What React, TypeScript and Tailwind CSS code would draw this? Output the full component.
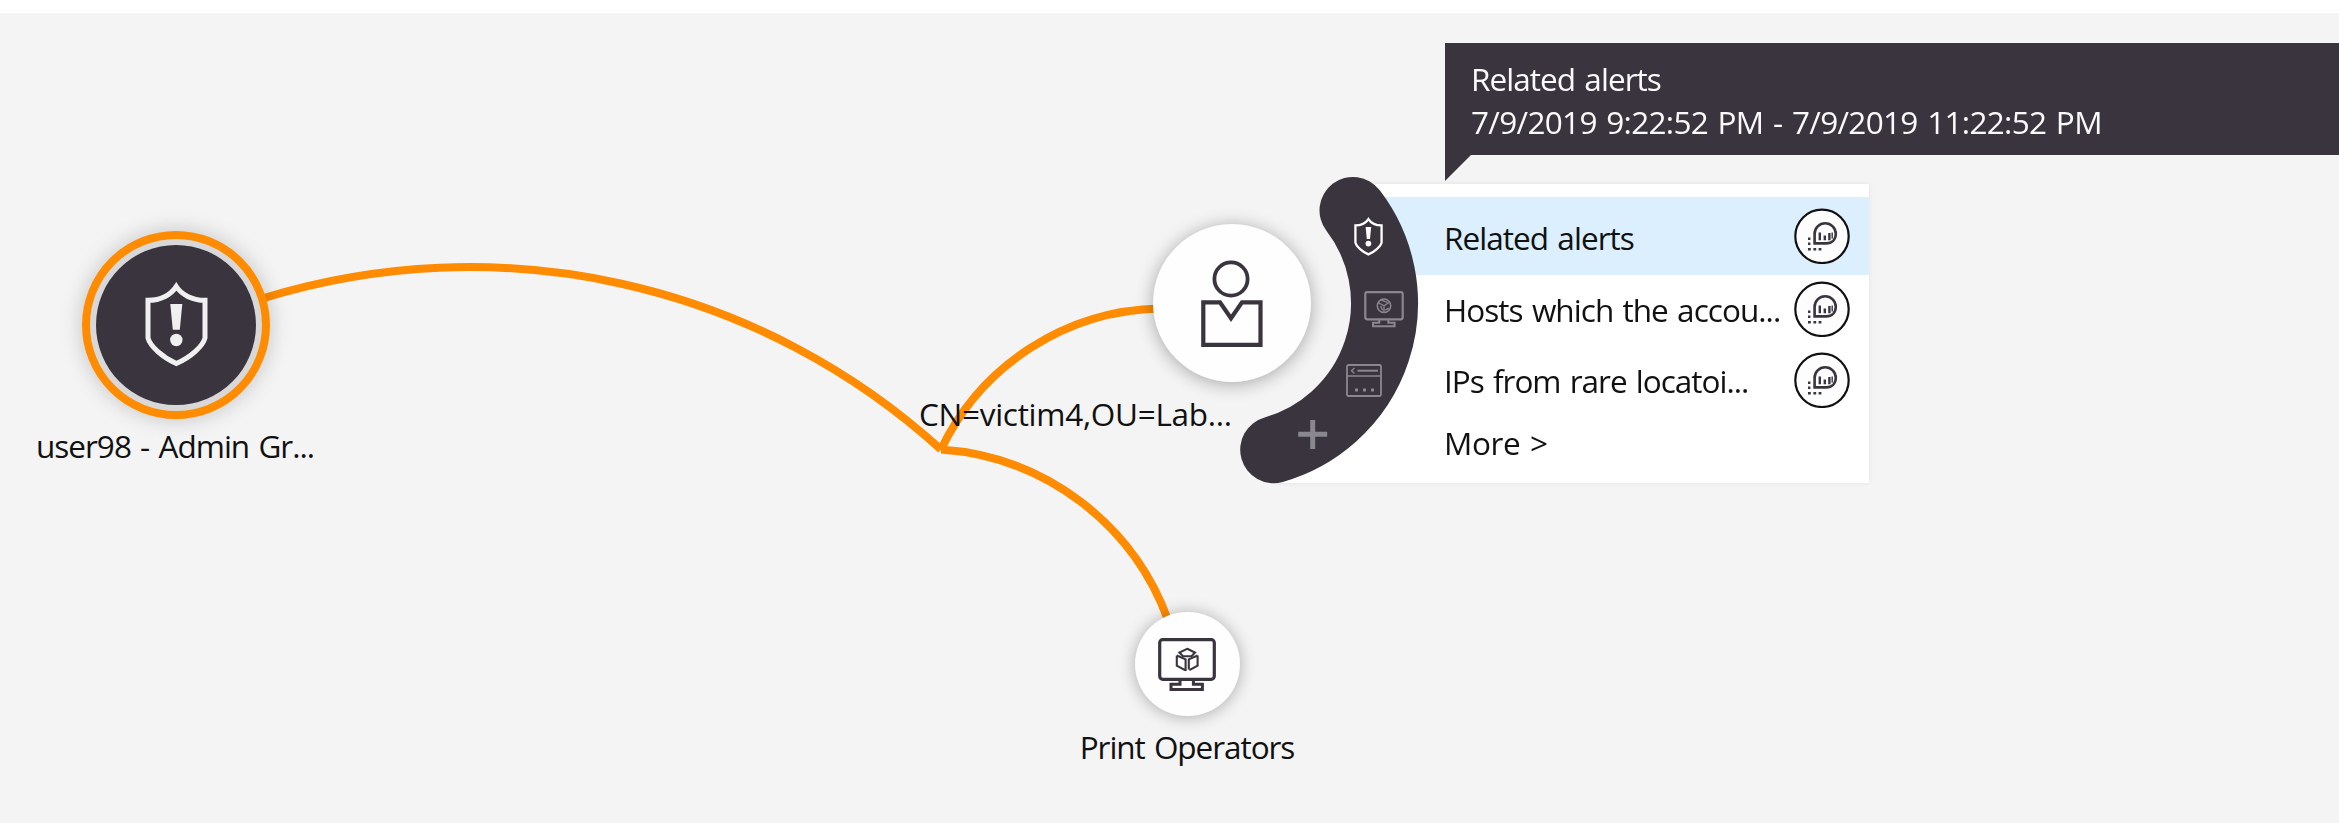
import React from "react";

type IconProps = { className?: string };

function ShieldIcon({ className }: IconProps) {
  return (
    <svg viewBox="0 0 63 85" className={className} fill="none">
      <path
        d="M31.3 4.5C26 12.5 16 18.3 3 18.3V56C5 64 17 75 31.3 81.5C46 75 58 64 60 56V18.3C47 18.3 36.5 12.5 31.3 4.5Z"
        stroke="currentColor"
        strokeWidth="5"
      />
      <path d="M25.3 22H37.3L34.8 47.7H27.8Z" fill="currentColor" />
      <circle cx="31.3" cy="58" r="6.2" fill="currentColor" />
    </svg>
  );
}

function MonitorFrame() {
  return (
    <>
      <rect x="1.7" y="1.7" width="54.6" height="39.6" rx="3" strokeWidth="3.2" />
      <path d="M22 42v4.3h-9v5.2h31.4v-5.2h-9V42" strokeWidth="3" />
    </>
  );
}

function MonitorCubeIcon({ className }: IconProps) {
  return (
    <svg viewBox="0 0 58 54" className={className} fill="none" stroke="currentColor">
      <MonitorFrame />
      <path d="M29.2 10.8L37 14.6L33.5 18.2H25L21.4 14.6Z" strokeWidth="2.1" />
      <path d="M18.8 17.5V27.6L27 32.2M18.8 17.5L27.6 21.4V33" strokeWidth="2.1" />
      <path d="M39.6 17.5V27.6L31.4 32.2M39.6 17.5L30.8 21.4V31.5" strokeWidth="2.1" />
    </svg>
  );
}

function MonitorGlobeIcon({ className }: IconProps) {
  return (
    <svg viewBox="0 0 58 54" className={className} fill="none" stroke="currentColor">
      <MonitorFrame />
      <circle cx="29" cy="21.5" r="9.8" strokeWidth="2.2" />
      <path d="M20.5 17L29 21.5L37.5 16M29 21.5V31M24 13L34 16.5M24 22L27 28M36 25L31 28" strokeWidth="2" />
    </svg>
  );
}

function WindowIcon({ className }: IconProps) {
  return (
    <svg viewBox="0 0 36 33" className={className} fill="none" stroke="currentColor">
      <rect x="1" y="1" width="34" height="31" rx="1.5" strokeWidth="1.8" />
      <path d="M1 12H35" strokeWidth="1.6" />
      <path d="M8.5 4L5.5 6.7L8.5 9.4" strokeWidth="1.4" />
      <path d="M11.5 6.7H32" strokeWidth="2" />
      <path d="M9 26h3M17 26h3M25 26h3" strokeWidth="3" />
    </svg>
  );
}

function PersonIcon({ className }: IconProps) {
  return (
    <svg viewBox="0 0 62 88" className={className} fill="none" stroke="#3a343f">
      <circle cx="30" cy="20" r="16.6" strokeWidth="3.8" />
      <path d="M2.3 43.3H19L30 59.3L41 43.3H59.5V85.8H2.3Z" strokeWidth="4.2" />
    </svg>
  );
}

function InsightBadge() {
  return (
    <svg viewBox="0 0 56 56" className="block h-14 w-14 shrink-0" fill="none">
      <circle cx="28" cy="28.3" r="26.7" fill="#fdfdfd" stroke="#111" strokeWidth="2.2" />
      <g stroke="#3a343f">
        <path d="M20.6 35.4V25.8a10.6 10.6 0 0 1 21.2 0c0 6-4 9.6-9.6 9.6z" strokeWidth="2.6" />
        <path d="M25.8 24.5v7.8M30.8 27.5v4.8M35.4 25v7.3" strokeWidth="2.4" />
        <path d="M38.2 24.5v6" strokeWidth="1.4" />
        <path d="M14 30.7h2.4M14 35.8h2.4M14 41.3h2.8M19.4 41.3h2.8M24.6 41.3h2.8" strokeWidth="2.4" />
      </g>
    </svg>
  );
}

function Edges() {
  return (
    <svg className="absolute inset-0" width="2339" height="823" viewBox="0 0 2339 823" fill="none">
      <g stroke="#ff8c00" strokeWidth="8">
        <path d="M264 298A700 700 0 0 1 941 449.5" />
        <path d="M941 449.5A248 248 0 0 1 1160 308.5" />
        <path d="M941 449.5A260 260 0 0 1 1168 620" />
      </g>
    </svg>
  );
}

const label = "whitespace-pre text-[31.5px] leading-10 text-[#111] [word-spacing:2px]";

const menuItems = [
  { text: "Related alerts", row: "h-[78px] bg-[#dceffe]", line: "pt-1 tracking-[-0.95px]", badge: true },
  { text: "Hosts which the accou...", row: "h-[67px]", line: "pt-0.5 tracking-[-0.95px]", badge: true },
  { text: "IPs from rare locatoi...", row: "h-[76px]", line: "pt-0.5 tracking-[-1px]", badge: true },
  { text: "More >", row: "h-[46px]", line: "pt-1 tracking-[-0.4px]", badge: false },
];

function ContextMenu() {
  return (
    <div className="absolute left-[1270px] top-[184px] w-[599px] drop-shadow-[0_0_2px_rgba(0,0,0,0.08)]">
      <div className="h-[299px] bg-white pt-[13px] [clip-path:polygon(90px_0,130px_120px,80px_216px,5px_299px,100%_299px,100%_0)]">
        {menuItems.map((m) => (
          <div key={m.text} className={`flex items-center justify-between pl-[174px] pr-[19px] ${m.row}`}>
            <span className={`${label} ${m.line}`}>{m.text}</span>
            {m.badge && <InsightBadge />}
          </div>
        ))}
      </div>
    </div>
  );
}

function RadialMenu() {
  return (
    <div className="absolute left-[1232px] top-[170px] h-[320px] w-[190px]">
      <svg width="190" height="320" viewBox="1232 170 190 320" fill="none">
        <path d="M1353 210.4A152.3 152.3 0 0 1 1273.7 449.7" stroke="#3a343f" strokeWidth="67" strokeLinecap="round" />
        <path d="M1298.2 434.3H1327.2M1312.7 420V449" stroke="#8b878f" strokeWidth="5" />
      </svg>
      <ShieldIcon className="absolute left-[122px] top-[47px] h-[39px] w-[29px] text-white" />
      <MonitorGlobeIcon className="absolute left-[132px] top-[121px] h-[37px] w-10 text-[#8b878f]" />
      <WindowIcon className="absolute left-[114px] top-[194px] h-[33px] w-9 text-[#8b878f]" />
    </div>
  );
}

function Tooltip() {
  return (
    <div className="absolute left-[1445px] right-0 top-[43px] drop-shadow-[0_0_1px_#fff]">
      <div className="h-[112px] bg-[#3a343f] pl-[26px] pt-[15px] text-[31.5px] leading-[42.7px] text-[#fafafa] [word-spacing:2px]">
        <p className="whitespace-pre tracking-[-0.95px]">Related alerts</p>
        <p className="whitespace-pre tracking-[-0.68px]">7/9/2019 9:22:52 PM - 7/9/2019 11:22:52 PM</p>
      </div>
      <div className="h-[26px] w-[26px] bg-[#3a343f] [clip-path:polygon(0_0,100%_0,0_100%)]" />
    </div>
  );
}

export default function App() {
  return (
    <div className="flex h-[823px] w-[2339px] flex-col overflow-hidden bg-white pt-[13px] font-['Open_Sans','Noto_Sans',sans-serif]">
      <main className="flex-1 bg-[#f4f4f4]" />
      <div className="absolute left-0 top-0 h-[823px] w-[2339px] overflow-hidden">
        <Edges />

        <div className="absolute left-[26px] top-[231px] flex w-[300px] flex-col items-center gap-[7px]">
          <div className="flex h-[188px] w-[188px] items-center justify-center rounded-full border-8 border-[#ff8c00] bg-[#d8d8d8] shadow-[0_0_22px_rgba(0,0,0,0.2)]">
            <div className="flex h-40 w-40 items-center justify-center rounded-full bg-[#3a343f] pb-0.5">
              <ShieldIcon className="h-[85px] w-[63px] text-[#f0f0f0]" />
            </div>
          </div>
          <span className={`${label} pr-0.5 tracking-[-0.98px]`}>user98 - Admin Gr...</span>
        </div>

        <div className="absolute left-[1153px] top-[224px] flex h-[158px] w-[158px] items-center justify-center rounded-full bg-[#fefefe] shadow-[0_2px_18px_rgba(0,0,0,0.32)]">
          <PersonIcon className="h-[88px] w-[62px]" />
        </div>
        <span className={`${label} absolute left-[919px] top-[394px] tracking-[-0.28px]`}>CN=victim4,OU=Lab...</span>

        <div className="absolute left-[1037px] top-[612px] flex w-[301px] flex-col items-center gap-[11px]">
          <div className="flex h-[104px] w-[105px] items-center justify-center rounded-full bg-[#fefefe] pt-0.5 pr-px shadow-[0_1px_16px_rgba(0,0,0,0.3)]">
            <MonitorCubeIcon className="h-[54px] w-[58px] text-[#3a343f]" />
          </div>
          <span className={`${label} pr-px tracking-[-1.05px]`}>Print Operators</span>
        </div>

        <ContextMenu />
        <RadialMenu />
        <Tooltip />
      </div>
    </div>
  );
}
